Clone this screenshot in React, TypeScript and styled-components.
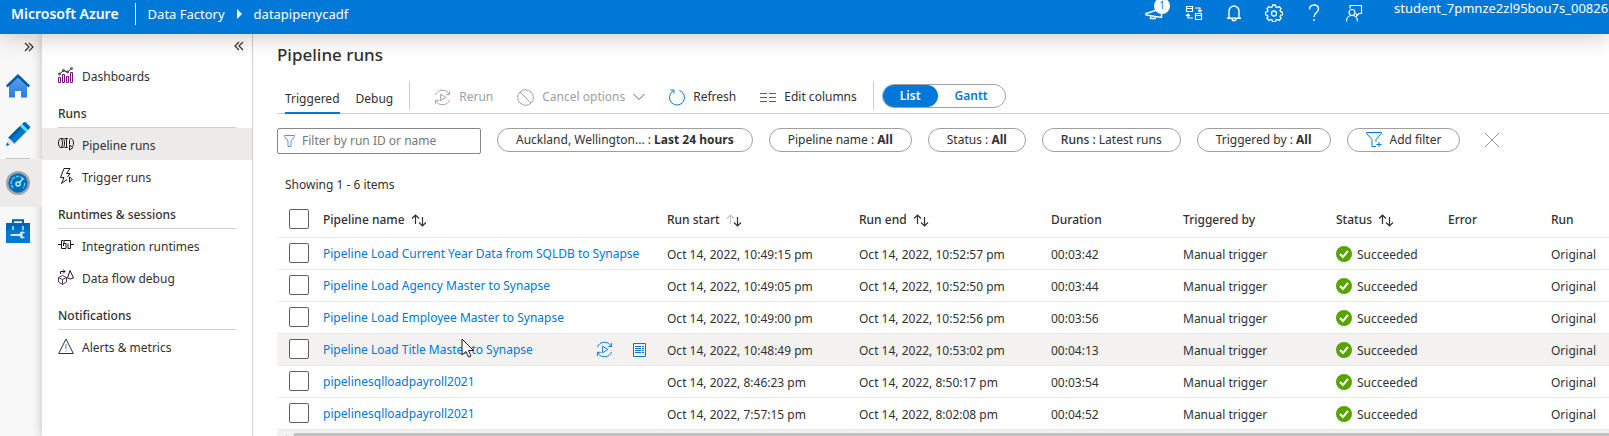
import React from "react";
import styled, { createGlobalStyle, css } from "styled-components";

const GlobalStyle = createGlobalStyle`
  * { box-sizing: border-box; }
  body {
    margin: 0;
    overflow: hidden;
    background: #fff;
    color: #323130;
    font: 12px/20px "Noto Sans", "Open Sans", sans-serif;
  }
  button, input { font: inherit; color: inherit; }
  button { padding: 0; border: 0; background: none; }
  svg { display: block; flex: none; }
`;

/* ---------- shell ---------- */

const Shell = styled.div`
  display: flex;
  flex-direction: column;
  height: 100vh;
`;

const TopBar = styled.header`
  display: flex;
  align-items: flex-start;
  flex: none;
  height: 34px;
  padding-left: 11px;
  background: #0078d7;
  color: #fff;
  position: relative;
  z-index: 5;
  box-shadow: 0 2px 24px rgba(0, 0, 0, 0.22);
`;

const Crumbs = styled.nav`
  display: flex;
  align-items: center;
  height: 28px;
  font-size: 13px;
  white-space: nowrap;
`;

const Brand = styled.a`
  padding-right: 16px;
  color: #fff;
  font-size: 14px;
  font-weight: 600;
  text-decoration: none;
`;

const CrumbLine = styled.span`
  width: 1px;
  height: 22px;
  margin-right: 12px;
  background: #fff;
`;

const Crumb = styled.a`
  color: #fff;
  text-decoration: none;
`;

const CrumbArrow = styled.svg`
  margin: 0 12px;
`;

const TopActions = styled.div`
  display: flex;
  margin-left: auto;
`;

const TopButton = styled.button`
  position: relative;
  display: flex;
  align-items: center;
  justify-content: center;
  width: 40px;
  height: 26px;
`;

const Badge = styled.span`
  position: absolute;
  left: 20px;
  top: -2px;
  width: 16px;
  height: 16px;
  border-radius: 50%;
  background: #fff;
  color: #0078d7;
  font-size: 10px;
  line-height: 14px;
  text-align: center;
`;

const Account = styled.div`
  width: 235px;
  padding-left: 20px;
  overflow: hidden;
  font-size: 13px;
  line-height: 16px;
  white-space: nowrap;
`;

const Body = styled.div`
  display: flex;
  flex: 1;
  min-height: 0;
`;

/* ---------- icon rail ---------- */

const Rail = styled.nav`
  display: flex;
  flex-direction: column;
  flex: none;
  width: 42px;
  background: #f8f8f8;
`;

const ExpandButton = styled.button`
  display: flex;
  align-items: center;
  justify-content: flex-end;
  height: 28px;
  padding: 0 8px 2px 0;
`;

const RailButton = styled.button<{ $active?: boolean }>`
  display: flex;
  align-items: center;
  height: 48px;
  padding-left: 6px;
  ${(p) =>
    p.$active &&
    css`
      position: relative;
      z-index: 2;
      background: #edebe9;
    `}
`;

const RailLine = styled.span`
  height: 1px;
  margin: 0 12px 0 6px;
  background: #c8c6c4;
`;

/* ---------- side menu ---------- */

const Side = styled.aside`
  position: relative;
  z-index: 1;
  flex: none;
  width: 211px;
  border-right: 1px solid #d2d0ce;
  background: #fff;
  box-shadow: 0 0 10px rgba(0, 0, 0, 0.25);
`;

const CollapseButton = styled.button`
  display: flex;
  align-items: center;
  justify-content: flex-end;
  width: 100%;
  height: 25px;
  padding: 0 8px 2px 0;
`;

const SideHeading = styled.h2`
  margin: 0 16px;
  padding: 13px 0 3px;
  border-bottom: 1px solid #d2d0ce;
  font-size: 12px;
  font-weight: 500;
  line-height: 20px;
`;

const SideItem = styled.a<{ $active?: boolean }>`
  display: flex;
  align-items: center;
  gap: 8px;
  height: 32px;
  padding: 0 16px;
  background: ${(p) => (p.$active ? "#edebe9" : "transparent")};
  color: inherit;
  text-decoration: none;
  white-space: nowrap;

  span {
    padding-top: 4px;
  }
`;

/* ---------- main ---------- */

const Main = styled.main`
  position: relative;
  z-index: 1;
  flex: 1;
  min-width: 0;
  padding-left: 24px;
  overflow: hidden;
  background: #fff;
`;

const Title = styled.h1`
  margin: 0;
  padding-top: 10px;
  font-size: 17px;
  font-weight: 500;
  line-height: 22px;
`;

const CommandBar = styled.div`
  display: flex;
  height: 48px;
  padding-left: 8px;
  border-bottom: 1px solid #d2d0ce;
  white-space: nowrap;
`;

const Tab = styled.button<{ $active?: boolean }>`
  height: 48px;
  margin-right: 16px;
  padding-top: 20px;
  border-bottom: 2px solid ${(p) => (p.$active ? "#0078d7" : "transparent")};
`;

const BarLine = styled.span<{ $spaced?: boolean }>`
  width: 1px;
  height: 29px;
  margin: 15px 0 0 ${(p) => (p.$spaced ? "16px" : "0")};
  background: #d2d0ce;
`;

const Command = styled.button`
  display: flex;
  align-items: center;
  gap: 8px;
  height: 32px;
  margin: 15px 0 0 24px;

  &:disabled {
    color: #a19f9d;
  }
`;

const ViewSwitch = styled.div`
  display: flex;
  height: 24px;
  margin: 18px 0 0 8px;
  border: 1px solid #a19f9d;
  border-radius: 12px;
`;

const ViewOption = styled.button<{ $active?: boolean }>`
  padding: 0 17px;
  border-radius: 11px;
  background: ${(p) => (p.$active ? "#0078d7" : "transparent")};
  color: ${(p) => (p.$active ? "#fff" : "#0078d7")};
  font-weight: 600;
  line-height: 22px;
`;

const Filters = styled.div`
  display: flex;
  gap: 16px;
  padding-top: 14px;
  white-space: nowrap;
`;

const SearchBox = styled.label`
  display: flex;
  align-items: center;
  gap: 7px;
  width: 204px;
  height: 26px;
  padding-left: 6px;
  border: 1px solid #8a8886;
  border-radius: 2px;

  input {
    flex: 1;
    min-width: 0;
    padding: 0;
    border: 0;
    outline: 0;
    background: none;
  }
  input::placeholder {
    color: #797775;
    opacity: 1;
  }
`;

const Pill = styled.button`
  display: flex;
  align-items: center;
  height: 24px;
  padding: 0 18px;
  border: 1px solid #a19f9d;
  border-radius: 12px;
  white-space: pre;

  svg {
    margin-right: 8px;
  }
`;

const ClearButton = styled.button`
  display: flex;
  align-items: center;
  height: 24px;
  padding-left: 8px;
`;

const Count = styled.p`
  margin: 0;
  padding: 21px 0 0 8px;
`;

/* ---------- table ---------- */

const Runs = styled.table`
  width: 100%;
  table-layout: fixed;
  border-collapse: separate;
  border-spacing: 0;

  th, td {
    padding: 0 8px;
    border-bottom: 1px solid #edebe9;
    text-align: left;
    white-space: nowrap;
  }
  th {
    height: 43px;
    padding-top: 8px;
    font-weight: 500;
  }
  td {
    height: 32px;
    padding-top: 2px;
  }
  td:nth-child(2) {
    padding-top: 0;
  }
  th:first-child {
    padding: 6px 0 0 12px;
  }
  td:first-child {
    padding: 0 0 1px 12px;
  }
`;

const Row = styled.tr<{ $hovered?: boolean }>`
  background: ${(p) => (p.$hovered ? "#f3f2f1" : "transparent")};
`;

const Tick = styled.input`
  display: block;
  width: 20px;
  height: 20px;
  margin: 0;
  appearance: none;
  border: 1px solid #605e5c;
  border-radius: 2px;
  background: #fff;
`;

const HeadLabel = styled.span`
  display: flex;
  align-items: center;
  gap: 6px;
`;

const NameCell = styled.div`
  position: relative;
  display: flex;
  align-items: center;
  justify-content: space-between;
`;

const RunLink = styled.a`
  color: #0078d7;
  text-decoration: none;
`;

const RowActions = styled.div`
  display: flex;
  align-items: center;
  gap: 20px;
  padding-right: 5px;
`;

const Pointer = styled.svg`
  position: absolute;
  left: 138px;
  top: -2px;
`;

const Status = styled.span`
  display: flex;
  align-items: center;
  gap: 5px;

  svg {
    margin-bottom: 2px;
  }
`;

const ScrollTrack = styled.div`
  display: flex;
  height: 17px;
  background: #f1f1f1;
`;

const ScrollArrow = styled.svg`
  margin: 5px 5px 0 4px;
`;

const ScrollThumb = styled.div`
  flex: 1;
  height: 12px;
  margin-top: 3px;
  background: #c1c1c1;
`;

/* ---------- icons ---------- */

const line = { fill: "none", stroke: "currentColor", strokeWidth: 1 } as const;

const DoubleChevron = ({ left }: { left?: boolean }) => (
  <svg width="10" height="10" viewBox="0 0 10 10" {...line} strokeWidth="1.200">
    <path d={left ? "M5 1 1 5l4 4M9 1 5 5l4 4" : "M1 1l4 4-4 4M5 1l4 4-4 4"} />
  </svg>
);

const Home = () => (
  <svg width="24" height="24" viewBox="0 0 24 24">
    <defs>
      <linearGradient id="house" x1="0" y1="0" x2="0" y2="1">
        <stop offset="0" stopColor="#5ea0ef" />
        <stop offset="1" stopColor="#2b7cd9" />
      </linearGradient>
    </defs>
    <path d="M3 11 12 2l9 9v12.500h-6V17H9v6.500H3z" fill="url(#house)" />
    <path d="M12 0 24 11.500 22.500 13.500 12 3.500 1.500 13.500 0 11.500z" fill="#005ba1" />
  </svg>
);

const Pencil = () => (
  <svg width="24" height="24" viewBox="0 0 24 24">
    <path d="M15 3 21 9 8 22 2 16z" fill="#0078d4" />
    <path d="M13.500 4.500 15.500 6.500 4 18l-2-2z" fill="#005ba1" />
    <path d="M14 4 16 2 22 8 20 10z" fill="#50e6ff" />
    <path d="M16 2 17.500.500q1.200-1 2.500 0L23.500 4q1 1.200 0 2.500L22 8z" fill="#0067b8" />
    <path d="M2.500 15.500 8.500 21.500 0 24z" fill="#d8e6f2" />
    <path d="M1 20.500 3.500 23 0 24z" fill="#0067b8" />
  </svg>
);

const Gauge = () => (
  <svg width="24" height="24" viewBox="0 0 24 24">
    <circle cx="12" cy="12" r="12" fill="#a3a3a3" />
    <circle cx="12" cy="12" r="9.700" fill="#0078d4" />
    <circle cx="12" cy="12" r="9.200" fill="#006bb8" />
    <path d="M7.200 17A6.800 6.800 0 1 1 18 9M18.800 12a6.800 6.800 0 0 1-2 5" fill="none" stroke="#50c8f0" strokeWidth="1.600" strokeDasharray="3.500 1" />
    <circle cx="12" cy="13" r="2" fill="none" stroke="#c3f1ff" strokeWidth="1.500" />
    <path d="m13.300 11.700 4-4.500" stroke="#c3f1ff" strokeWidth="1.500" />
  </svg>
);

const Toolbox = () => (
  <svg width="24" height="24" viewBox="0 0 24 24">
    <path d="M7 5V1.200h10V5" fill="none" stroke="#005ba1" strokeWidth="2" />
    <path d="M0 4h24v7H0z" fill="#0067b8" />
    <path d="M0 11h24v13H0z" fill="#0078d4" />
    <path d="M6 7h2v4H6zM16 7h2v4h-2z" fill="#50e6ff" />
    <path d="M5 15h8.500a3 3 0 0 1 5.500-1l-2.500.5v3l2.500.5a3 3 0 0 1-5.500-1H5q-1.500-1 0-2z" fill="#d8e6f2" />
  </svg>
);

const Dashboards = () => (
  <svg width="16" height="16" viewBox="0 0 16 16" {...line}>
    <path d="M.5 15.500v-5h2v5zM4.500 15.500v-8h2v8zM8.500 15.500v-6h2v6zM12.500 15.500v-10h2v10z" stroke="#7b0f7e" />
    <path d="m1.500 7 4-3.500 4 1.500 4-3.500" />
    <circle cx="1.500" cy="7" r="1" /><circle cx="5.500" cy="3.500" r="1" />
    <circle cx="9.500" cy="5" r="1" /><circle cx="13.500" cy="1.500" r="1" />
  </svg>
);

const PipelineIcon = () => (
  <svg width="16" height="16" viewBox="0 0 16 16" {...line} stroke="#1b1a19">
    <ellipse cx="2.500" cy="7" rx="2" ry="4.500" />
    <path d="M2.500 2.500h2.500c2 0 2 9 0 9H2.500M6.500 2.500h3.500M6.500 11.500h3M8.500 2.500v9M11.500 8V4.500c0-3 4-2.500 4 2.500 0 2-.5 3-1 3.500" />
    <path d="m11.500 9 3.500 2.500-3.500 2.500z" />
  </svg>
);

const TriggerIcon = () => (
  <svg width="16" height="16" viewBox="0 0 16 16" {...line} stroke="#1b1a19">
    <path d="M9 11.500 3.500 15.500 6 9.500H2.500L6 .5h6L8.500 5.500h3.500L9.500 9" />
    <path d="m11.500 9 3 2.500-3 2.500z" />
  </svg>
);

const RuntimeIcon = () => (
  <svg width="16" height="16" viewBox="0 0 16 16" {...line} stroke="#1b1a19">
    <path d="M0 7.500h3M13 7.500h3M5.500 3.500h-2v8h4.500v-5h-2v-3h6.500v8h-2.500v-5M5.500 6v3" />
  </svg>
);

const DataFlowIcon = () => (
  <svg width="16" height="16" viewBox="0 0 16 16" {...line} stroke="#1b1a19">
    <path d="m4.500 6.500 4 2v4.500l-4 2.500-4-2.500V8.500zM.5 8.500l4 2 4-2M4.500 10.500v5" stroke="#5c2d6e" />
    <path d="M2.500 5V2.500H7M5 .5l2 2-2 2M12 1.500 15.500 9q-3.500 2-6 0z" />
  </svg>
);

const AlertIcon = () => (
  <svg width="16" height="16" viewBox="0 0 16 16" {...line}>
    <path d="M8 1 15.300 15.500H.7z" />
    <path d="M8 6v5M8 12.500v1" stroke="#2b88d8" />
  </svg>
);

const RerunIcon = ({ color }: { color: string }) => (
  <svg width="17" height="17" viewBox="0 0 18 18" {...line} stroke={color}>
    <path d="M1.500 6.500A8 8 0 0 1 16 5.500M16.500 11.500A8 8 0 0 1 2 12.500M16.500 2v4H12.500M1.500 16v-4H5.500" />
    <path d="M7 5.500 12.500 9 7 12.500z" />
  </svg>
);

const CancelIcon = () => (
  <svg width="17" height="17" viewBox="0 0 17 17" {...line}>
    <circle cx="8.500" cy="8.500" r="7.800" />
    <path d="m3 3 11 11" />
  </svg>
);

const ChevronDown = () => (
  <svg width="12" height="8" viewBox="0 0 12 8" {...line} stroke="#605e5c">
    <path d="m.5 1 5.500 5.500L11.500 1" />
  </svg>
);

const RefreshIcon = () => (
  <svg width="16" height="17" viewBox="0 0 16 17" {...line} stroke="#0078d7">
    <path d="M10.500 1.500A7.500 7.500 0 1 1 4 2.200M1.500 1h3.500v3.500" />
  </svg>
);

const ColumnsIcon = () => (
  <svg width="16" height="11" viewBox="0 0 16 11" {...line} stroke="#0078d7">
    <path d="M0 1.500h7M0 5.500h7M0 9.500h7M9 1.500h7M9 5.500h7M9 9.500h7" />
  </svg>
);

const FunnelIcon = () => (
  <svg width="11" height="12" viewBox="0 0 11 12" {...line} stroke="#5c8fdc">
    <path d="M.5.500h10v1L7 6v5.500H4V6L.5 1.500z" />
  </svg>
);

const AddFilterIcon = () => (
  <svg width="16" height="16" viewBox="0 0 16 16" {...line} stroke="#0078d7">
    <path d="M10 14.500H6v-7L.5 1.500v-1h15v1L10 7.500V10M10.500 12.500h5M13 10v5" />
  </svg>
);

const CloseIcon = () => (
  <svg width="16" height="16" viewBox="0 0 16 16" {...line} stroke="#979593">
    <path d="m1 1 14 14M15 1 1 15" />
  </svg>
);

const SortIcon = ({ descending }: { descending?: boolean }) => (
  <svg width="16" height="13" viewBox="0 0 16 13" {...line} strokeWidth="1.200">
    <path d="M4.500 10V1.500M1 4.500l3.500-3.500L8 4.500" stroke={descending ? "#c8c6c4" : "#323130"} />
    <path d="M11.500 3v8.500M8 8.500l3.500 3.500L15 8.500" />
  </svg>
);

const SuccessIcon = () => (
  <svg width="16" height="16" viewBox="0 0 16 16">
    <circle cx="8" cy="8" r="8" fill="#57a300" />
    <path d="m4 8 3 3 5-6" fill="none" stroke="#fff" strokeWidth="2" />
  </svg>
);

const ReportIcon = () => (
  <svg width="13" height="14" viewBox="0 0 13 14" {...line} stroke="#0078d7">
    <path d="M.5.500h12v13H.5zM2 3.500h6M2 5.500h6M2 7.500h6M2 9.500h6M9 3.500h2M9 5.500h2M9 7.500h2M9 9.500h2" />
  </svg>
);

const MegaphoneIcon = () => (
  <svg width="18" height="18" viewBox="0 0 18 18" {...line} strokeWidth="1.400">
    <path d="M1 11V9.500L16.500 4.500V13.500L1 11zM5.500 12v2.500h4.500l.5-1.500" />
  </svg>
);

const SwitchIcon = () => (
  <svg width="18" height="16" viewBox="0 0 18 16" {...line} strokeWidth="1.200">
    <path d="M1.500 1.500h6v5h-6zM1.500 3.500h6M10.500 8.500h6v6h-6zM10.500 10.500h6M10 3h5v4M13 5l2 2 2-2M8 13H3V9M1 11l2-2 2 2" />
  </svg>
);

const BellIcon = () => (
  <svg width="16" height="18" viewBox="0 0 16 18" {...line} strokeWidth="1.400">
    <path d="M1 14.300h14M3 14V7a5 5 0 0 1 10 0v7M6 14.500c0 3 4 3 4 0" />
  </svg>
);

const GearIcon = () => (
  <svg width="18" height="18" viewBox="0 0 18 18" {...line} strokeWidth="1.300">
    <path d="M7.600 1h2.800l.5 2 1.400.6 1.800-1.100 2 2-1.100 1.800.6 1.400 2 .5v2.600l-2 .5-.6 1.400 1.100 1.800-2 2-1.800-1.100-1.400.6-.5 2H7.600l-.5-2-1.400-.6-1.800 1.100-2-2L3 12.700l-.6-1.400-2-.5V8.200l2-.5L3 6.300 1.900 4.500l2-2 1.800 1.100L7.100 3z" />
    <circle cx="9" cy="9.500" r="2.500" />
  </svg>
);

const HelpIcon = () => (
  <svg width="12" height="18" viewBox="0 0 12 18" {...line} strokeWidth="1.400">
    <path d="M1.500 5.500C1.500-.5 10.500-.5 10.500 5c0 3.500-4.500 3.500-4.500 8M6 15v2" />
  </svg>
);

const FeedbackIcon = () => (
  <svg width="18" height="18" viewBox="0 0 18 18" {...line} strokeWidth="1.200">
    <path d="M5 4.500V1.500h11.500v8H14l-2.500 2.500V9.500" />
    <circle cx="7" cy="8.500" r="3" />
    <path d="M1.500 17.500c0-8 11-8 11 0" />
  </svg>
);

/* ---------- content ---------- */

const runs = [
  ["Pipeline Load Current Year Data from SQLDB to Synapse", "10:49:15 pm", "10:52:57 pm", "00:03:42"],
  ["Pipeline Load Agency Master to Synapse", "10:49:05 pm", "10:52:50 pm", "00:03:44"],
  ["Pipeline Load Employee Master to Synapse", "10:49:00 pm", "10:52:56 pm", "00:03:56"],
  ["Pipeline Load Title Master to Synapse", "10:48:49 pm", "10:53:02 pm", "00:04:13"],
  ["pipelinesqlloadpayroll2021", "8:46:23 pm", "8:50:17 pm", "00:03:54"],
  ["pipelinesqlloadpayroll2021", "7:57:15 pm", "8:02:08 pm", "00:04:52"],
];

const hoveredRow = 3;

const topActions = [
  { label: "Updates", icon: <MegaphoneIcon />, badge: "1" },
  { label: "Switch data factory", icon: <SwitchIcon /> },
  { label: "Notifications", icon: <BellIcon /> },
  { label: "Settings", icon: <GearIcon /> },
  { label: "Help", icon: <HelpIcon /> },
  { label: "Feedback", icon: <FeedbackIcon /> },
];

const filters = [
  { name: "Auckland, Wellington... : ", value: "Last 24 hours" },
  { name: "Pipeline name : ", value: "All" },
  { name: "Status : ", value: "All" },
  { name: "Runs : ", value: "Latest runs", inverse: true },
  { name: "Triggered by : ", value: "All" },
];

const FilterName = styled.span<{ $strong?: boolean }>`
  font-weight: ${(p) => (p.$strong ? 500 : 400)};
`;

const FilterValue = styled.span<{ $strong?: boolean }>`
  font-weight: ${(p) => (p.$strong ? 700 : 400)};
`;

export default function App() {
  return (
    <Shell>
      <GlobalStyle />
      <TopBar>
        <Crumbs>
          <Brand href="#">Microsoft Azure</Brand>
          <CrumbLine />
          <Crumb href="#">Data Factory</Crumb>
          <CrumbArrow width="5" height="10" viewBox="0 0 5 10" fill="#fff">
            <path d="M0 0 5 5 0 10z" />
          </CrumbArrow>
          <Crumb href="#">datapipenycadf</Crumb>
        </Crumbs>
        <TopActions>
          {topActions.map((a) => (
            <TopButton key={a.label} aria-label={a.label}>
              {a.icon}
              {a.badge && <Badge>{a.badge}</Badge>}
            </TopButton>
          ))}
          <Account>student_7pmnze2zl95bou7s_00826</Account>
        </TopActions>
      </TopBar>

      <Body>
        <Rail>
          <ExpandButton aria-label="Expand"><DoubleChevron /></ExpandButton>
          <RailButton aria-label="Home"><Home /></RailButton>
          <RailButton aria-label="Author"><Pencil /></RailButton>
          <RailLine />
          <RailButton aria-label="Monitor" $active><Gauge /></RailButton>
          <RailButton aria-label="Manage"><Toolbox /></RailButton>
        </Rail>

        <Side>
          <CollapseButton aria-label="Collapse"><DoubleChevron left /></CollapseButton>
          <SideItem href="#"><Dashboards /><span>Dashboards</span></SideItem>
          <SideHeading>Runs</SideHeading>
          <SideItem href="#" $active><PipelineIcon /><span>Pipeline runs</span></SideItem>
          <SideItem href="#"><TriggerIcon /><span>Trigger runs</span></SideItem>
          <SideHeading>Runtimes &amp; sessions</SideHeading>
          <SideItem href="#"><RuntimeIcon /><span>Integration runtimes</span></SideItem>
          <SideItem href="#"><DataFlowIcon /><span>Data flow debug</span></SideItem>
          <SideHeading>Notifications</SideHeading>
          <SideItem href="#"><AlertIcon /><span>Alerts &amp; metrics</span></SideItem>
        </Side>

        <Main>
          <Title>Pipeline runs</Title>
          <CommandBar>
            <Tab $active>Triggered</Tab>
            <Tab>Debug</Tab>
            <BarLine />
            <Command disabled><RerunIcon color="#a19f9d" />Rerun</Command>
            <Command disabled><CancelIcon />Cancel options<ChevronDown /></Command>
            <Command><RefreshIcon />Refresh</Command>
            <Command><ColumnsIcon />Edit columns</Command>
            <BarLine $spaced />
            <ViewSwitch>
              <ViewOption $active>List</ViewOption>
              <ViewOption>Gantt</ViewOption>
            </ViewSwitch>
          </CommandBar>

          <Filters>
            <SearchBox>
              <FunnelIcon />
              <input type="text" placeholder="Filter by run ID or name" aria-label="Filter by run ID or name" />
            </SearchBox>
            {filters.map((f) => (
              <Pill key={f.name}>
                <FilterName $strong={f.inverse}>{f.name}</FilterName>
                <FilterValue $strong={!f.inverse}>{f.value}</FilterValue>
              </Pill>
            ))}
            <Pill><AddFilterIcon />Add filter</Pill>
            <ClearButton aria-label="Clear filters"><CloseIcon /></ClearButton>
          </Filters>

          <Count>Showing 1 - 6 items</Count>

          <Runs>
            <colgroup>
              <col width="38" />
              <col width="344" />
              <col width="192" />
              <col width="192" />
              <col width="132" />
              <col width="153" />
              <col width="112" />
              <col width="103" />
              <col />
            </colgroup>
            <thead>
              <tr>
                <th><Tick type="checkbox" aria-label="Select all runs" /></th>
                <th><HeadLabel>Pipeline name<SortIcon /></HeadLabel></th>
                <th><HeadLabel>Run start<SortIcon descending /></HeadLabel></th>
                <th><HeadLabel>Run end<SortIcon /></HeadLabel></th>
                <th>Duration</th>
                <th>Triggered by</th>
                <th><HeadLabel>Status<SortIcon /></HeadLabel></th>
                <th>Error</th>
                <th>Run</th>
              </tr>
            </thead>
            <tbody>
              {runs.map(([name, start, end, duration], i) => (
                <Row key={start} $hovered={i === hoveredRow}>
                  <td><Tick type="checkbox" aria-label={`Select ${name}`} /></td>
                  <td>
                    <NameCell>
                      <RunLink href="#">{name}</RunLink>
                      {i === hoveredRow && (
                        <>
                          <RowActions>
                            <button aria-label="Rerun"><RerunIcon color="#0078d7" /></button>
                            <button aria-label="Consumption"><ReportIcon /></button>
                          </RowActions>
                          <Pointer width="13" height="20" viewBox="0 0 13 20">
                            <path d="M1 1v16l4-3.500 2.500 5.500 2.500-1-2.500-5.500H12.500z" fill="#fff" stroke="#1b1a19" />
                          </Pointer>
                        </>
                      )}
                    </NameCell>
                  </td>
                  <td>Oct 14, 2022, {start}</td>
                  <td>Oct 14, 2022, {end}</td>
                  <td>{duration}</td>
                  <td>Manual trigger</td>
                  <td><Status><SuccessIcon />Succeeded</Status></td>
                  <td />
                  <td>Original</td>
                </Row>
              ))}
            </tbody>
          </Runs>
          <ScrollTrack>
            <ScrollArrow width="8" height="8" viewBox="0 0 8 8" fill="#a3a3a3">
              <path d="M6 0v8L2 4z" />
            </ScrollArrow>
            <ScrollThumb />
          </ScrollTrack>
        </Main>
      </Body>
    </Shell>
  );
}
